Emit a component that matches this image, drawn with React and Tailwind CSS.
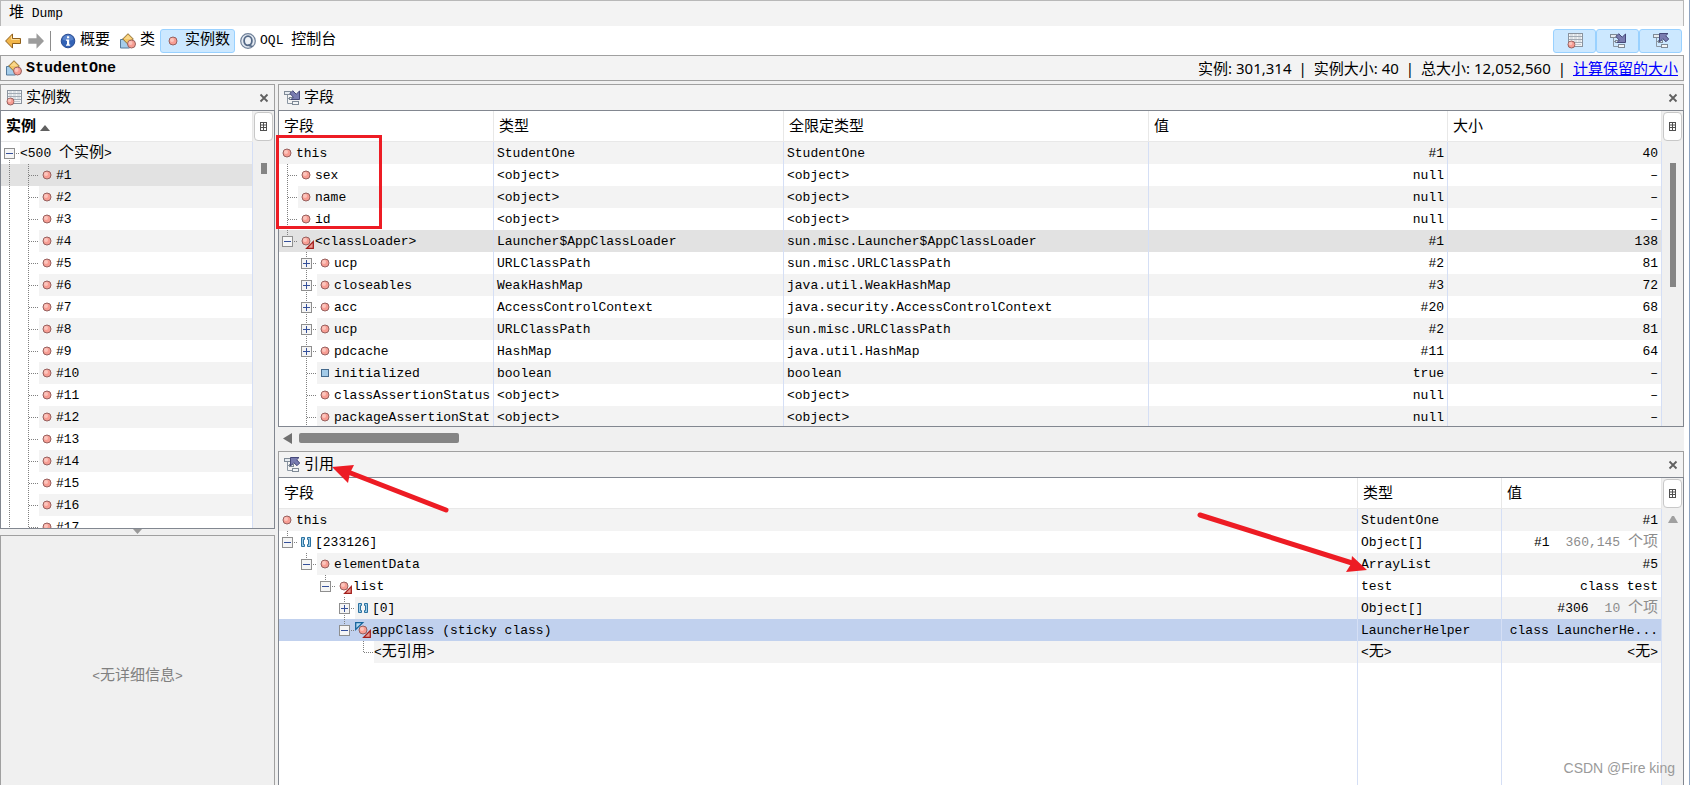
import { useState } from "react";
import clsx from "clsx";

const INSTANCES = Array.from({ length: 17 }, (_, i) => `#${i + 1}`);

const FIELDS = [
    { guides: [], icon: "object", name: "this", type: "StudentOne", full: "StudentOne", value: "#1", size: "40" },
    { guides: ["tee"], icon: "object", name: "sex", type: "<object>", full: "<object>", value: "null", size: "–" },
    { guides: ["tee"], icon: "object", name: "name", type: "<object>", full: "<object>", value: "null", size: "–" },
    { guides: ["tee"], icon: "object", name: "id", type: "<object>", full: "<object>", value: "null", size: "–" },
    { guides: ["minus"], icon: "static", name: "<classLoader>", type: "Launcher$AppClassLoader", full: "sun.misc.Launcher$AppClassLoader", value: "#1", size: "138" },
    { guides: ["none", "plus"], icon: "object", name: "ucp", type: "URLClassPath", full: "sun.misc.URLClassPath", value: "#2", size: "81" },
    { guides: ["none", "plus"], icon: "object", name: "closeables", type: "WeakHashMap", full: "java.util.WeakHashMap", value: "#3", size: "72" },
    { guides: ["none", "plus"], icon: "object", name: "acc", type: "AccessControlContext", full: "java.security.AccessControlContext", value: "#20", size: "68" },
    { guides: ["none", "plus"], icon: "object", name: "ucp", type: "URLClassPath", full: "sun.misc.URLClassPath", value: "#2", size: "81" },
    { guides: ["none", "plus"], icon: "object", name: "pdcache", type: "HashMap", full: "java.util.HashMap", value: "#11", size: "64" },
    { guides: ["none", "tee"], icon: "primitive", name: "initialized", type: "boolean", full: "boolean", value: "true", size: "–" },
    { guides: ["none", "tee"], icon: "object", name: "classAssertionStatus", type: "<object>", full: "<object>", value: "null", size: "–" },
    { guides: ["none", "tee"], icon: "object", name: "packageAssertionStat", type: "<object>", full: "<object>", value: "null", size: "–" },
];

const REFERENCES = [
    { guides: [], icon: "object", name: "this", type: "StudentOne", value: "#1" },
    { guides: ["minus"], icon: "array", name: "[233126]", type: "Object[]", value: "#1", items: "360,145" },
    { guides: ["none", "minus"], icon: "object", name: "elementData", type: "ArrayList", value: "#5" },
    { guides: ["none", "none", "minus"], icon: "static", name: "list", type: "test", value: "class test" },
    { guides: ["none", "none", "none", "plus"], icon: "array", name: "[0]", type: "Object[]", value: "#306", items: "10" },
    { guides: ["none", "none", "none", "minus"], icon: "root", name: "appClass (sticky class)", type: "LauncherHelper", value: "class LauncherHe..." },
    { guides: ["none", "none", "none", "none", "end"], name: "<无引用>", type: "<无>", value: "<无>" },
];

// Latin runs are monospaced, Chinese runs are set a little larger
const Text = ({ children }) =>
    children.split(/([\u4e00-\u9fff]+)/).map((part, i) =>
        i % 2 ? <span key={i} className="text-[15px]">{part}</span> : part
    );

/* ---------- icons ---------- */

const Dot = ({ cx = 8, cy = 8, r = 4 }) => (
    <g>
        <circle cx={cx} cy={cy} r={r} fill="#f79d93" stroke="#96615f" />
        <circle cx={cx - 1} cy={cy - 1} r={r / 2} fill="#fcc4bc" />
    </g>
);

const NodeIcon = ({ type }) => (
    <svg className="w-4 h-4 shrink-0 overflow-visible" viewBox="0 0 16 16" aria-hidden="true">
        {type === "object" && <Dot />}
        {type === "primitive" && <rect x="4.5" y="4.5" width="7" height="7" fill="#a3cbe8" stroke="#456a8c" />}
        {type === "array" && (
            <g fill="#9ccbe8" stroke="#2a719f">
                <path d="M3.5 3.5h3v2h-1v5h1v2h-3z" />
                <path d="M12.500 3.5h-3v2h1v5h-1v2h3z" />
            </g>
        )}
        {type === "root" && <path d="M.7.7h7L.7 7.500z" fill="#b4dbf5" stroke="#17659c" strokeWidth="1.3" />}
        {(type === "static" || type === "root") && (
            <g>
                <Dot />
                <path d="M15.300 8.5v6.800H8.700z" fill="#ee9a92" stroke="#a3201d" strokeWidth="1.3" />
            </g>
        )}
    </svg>
);

const ClassIcon = () => (
    <svg className="w-4 h-4" viewBox="0 0 16 16" aria-hidden="true">
        <path d="M.5 6.500h3l6 4v4.500h-9z" fill="#a5cdea" stroke="#557a9c" />
        <path d="M8 .7 13.3 6 8 11.300 2.700 6z" fill="#f3c768" stroke="#8f6f35" />
        <path d="M8 2.200 11.500 6H4.500z" fill="#f9d88c" />
        <Dot cx={11.5} cy={11} r={4} />
    </svg>
);

const ListIcon = () => (
    <svg className="w-4 h-4" viewBox="0 0 16 16" aria-hidden="true">
        <rect x="1.500" y=".5" width="14" height="13" fill="#f2f4f6" stroke="#8a939e" />
        <path d="M2 3.500h13M2 6.500h13M2 9.500h13" stroke="#a2abb5" />
        <path d="M3 2h3M7 2h3M11 2h3M3 5h3M7 5h3M11 5h3M7 8h3M11 8h3M9 11.500h5" stroke="#c3cad1" />
        <Dot cx={4.5} cy={11.5} r={3.5} />
    </svg>
);

const TreeIcon = ({ up }) => (
    <svg className="w-4 h-4" viewBox="0 0 16 16" aria-hidden="true">
        <path d="M3.500 4v9.500h4.500M3.500 8.500h4" fill="none" stroke="#8b96a2" />
        <rect x=".5" y="1.500" width="6" height="3" fill="#e6ebf0" stroke="#7f8a96" />
        <rect x="8.500" y="11.500" width="6" height="3" fill="#f3f5f7" stroke="#7f8a96" />
        <rect x="5.500" y="7.500" width="4" height="2" fill="#e6ebf0" stroke="#7f8a96" />
        {up ? (
            <path d="M6.500.5h8.500l-2.300 2.300 3 3.200-2.700 2.700-3.200-3-3.300 3.300z" fill="#797cb0" stroke="#454879" />
        ) : (
            <path d="M15.500 9.500H7l2.300-2.300-3.300-3.700L8.700.700l3.500 3.500L15.500 1z" fill="#797cb0" stroke="#454879" />
        )}
    </svg>
);

const ArrowIcon = ({ back }) => (
    <svg className="w-4 h-4" viewBox="0 0 16 16" aria-hidden="true">
        {back ? (
            <g>
                <path d="M7.500.9v4.600h8v5h-8v4.600L.6 8z" fill="#f2b64a" stroke="#8f5f1a" />
                <path d="M6.500 3.200v3.300h8" fill="none" stroke="#fbdc98" />
            </g>
        ) : (
            <path d="M8.500.3v5H.3v5.400h8.200v5L16 8z" fill="#9c9c9c" />
        )}
    </svg>
);

const InfoIcon = () => (
    <svg className="w-4 h-4" viewBox="0 0 16 16" aria-hidden="true">
        <circle cx="8" cy="8" r="6.800" fill="#3262b5" stroke="#2a4c92" />
        <path d="M2.500 6.500a5.600 5.600 0 0 1 11 0c-3 1.600-8 1.600-11 0z" fill="#5a84cc" />
        <path d="M7 3.200h2.200v2H7zM6 6.500h3.200v5h1v1.200H6v-1.200h1V7.700H6z" fill="#fff" />
    </svg>
);

const OqlIcon = () => (
    <svg className="w-4 h-4" viewBox="0 0 16 16" aria-hidden="true">
        <circle cx="8" cy="8" r="7.300" fill="#e3e9f1" stroke="#6f8199" strokeWidth="1.200" />
        <ellipse cx="8" cy="7.800" rx="3.900" ry="4.600" fill="#eef2f7" stroke="#546987" strokeWidth="1.800" />
        <path d="M8.500 11.500c1 1.600 2.200 2 4 1.600" fill="none" stroke="#546987" strokeWidth="1.500" />
    </svg>
);

/* ---------- shared parts ---------- */

const STEMS = {
    line: "M8.500 0v22",
    tee: "M8.500 0v22M9 11.500h10",
    end: "M8.500 0v12M9 11.500h10",
    plus: "M8.500 0v22M9 11.500h10",
    minus: "M8.500 0v12M9 11.500h10",
    top: "M8.500 12v10M9 11.500h10",
};

const Guide = ({ kind }) => {
    const handle = kind === "plus" || kind === "minus" || kind === "top";
    const svg = (
        <svg className="block w-[19px] h-[22px]" viewBox="0 0 19 22" fill="none" aria-hidden="true">
            {STEMS[kind] && <path d={STEMS[kind]} stroke="#808080" strokeDasharray="1 1" />}
            {handle && (
                <g>
                    <rect x="3.500" y="6.500" width="10" height="10" fill="#f5f5f5" stroke="#8f8f8f" />
                    <path d={kind === "plus" ? "M5 11.500h7M8.500 8v7" : "M5 11.500h7"} stroke="#35509a" />
                </g>
            )}
        </svg>
    );
    return handle ? (
        <button type="button" className="shrink-0" aria-label={kind === "plus" ? "展开" : "折叠"}>
            {svg}
        </button>
    ) : (
        <span className="shrink-0">{svg}</span>
    );
};

const NameCell = ({ guides, icon, name, striped }) => (
    <td className="p-0 overflow-hidden border-r border-[#d5dff5]">
        <div className="flex h-[22px]">
            {guides.map((kind, i) => <Guide key={i} kind={kind} />)}
            <div className={clsx("flex flex-1 items-center", striped && "bg-[#f3f3f3]")}>
                {icon && <NodeIcon type={icon} />}
                <span className={clsx("pt-[2px]", icon && "pl-px")}><Text>{name}</Text></span>
            </div>
        </div>
    </td>
);

const Cell = ({ children, right, striped }) => (
    <td
        className={clsx(
            "px-[3px] pt-[2px] pb-0 overflow-hidden border-r border-[#d5dff5]",
            right && "text-right",
            striped && "bg-[#f3f3f3]"
        )}
    >
        {children}
    </td>
);

const Head = ({ children }) => (
    <th className="pl-[5px] pt-1 pb-0 text-left font-normal text-[15px] border-r border-b border-[#e8e8e8]">
        {children}
    </th>
);

const rowClass = (selected, color) => clsx("h-[22px]", selected && color);

const Panel = ({ icon, title, className, children }) => (
    <section className={clsx("flex flex-col min-h-0", className)}>
        <header className="flex items-center h-[26px] shrink-0 px-[5px] bg-[#f3f3f3] border border-b-0 border-[#a0a0a0]">
            {icon}
            <h2 className="pl-1 pt-[2px] text-[15px]">{title}</h2>
            <button type="button" aria-label="关闭" className="ml-auto">
                <svg className="w-[10px] h-[10px]" viewBox="0 0 10 10" aria-hidden="true">
                    <path d="M1.500 1.500l7 7M8.500 1.500l-7 7" stroke="#606060" strokeWidth="1.800" />
                </svg>
            </button>
        </header>
        {children}
    </section>
);

const ScrollColumn = ({ children }) => (
    <div className="flex flex-col items-center shrink-0 w-[21px] bg-[#f0f0f0]">
        <button
            type="button"
            aria-label="选择列"
            className="flex items-center justify-center mt-px w-[19px] h-[29px] bg-white border border-[#c8c8c8] rounded"
        >
            <svg className="w-[7px] h-[9px]" viewBox="0 0 7 9" fill="none" stroke="#505050" aria-hidden="true">
                <path d="M.5 0v9M3.500 0v9M6.500 0v9M0 .5h7M0 3h7M0 5.500h7M0 8.500h7" />
            </svg>
        </button>
        {children}
    </div>
);

/* ---------- panels ---------- */

const InstancesPanel = () => {
    const [selected, setSelected] = useState("#1");
    return (
        <Panel icon={<ListIcon />} title="实例数" className="flex-[446]">
            <div className="flex flex-1 min-h-0 overflow-hidden bg-white border border-[#828790]">
                <div className="flex-1 overflow-hidden">
                    <table className="w-full table-fixed border-separate border-spacing-0">
                        <thead>
                            <tr className="h-[31px]">
                                <Head>
                                    <span className="flex items-center gap-1 font-bold">
                                        实例
                                        <svg className="w-[10px] h-[6px]" viewBox="0 0 10 6" aria-hidden="true">
                                            <path d="M5 0l5 6H0z" fill="#606060" />
                                        </svg>
                                    </span>
                                </Head>
                            </tr>
                        </thead>
                        <tbody>
                            <tr className="h-[22px]">
                                <NameCell guides={["top"]} name="<500 个实例>" striped />
                            </tr>
                            {INSTANCES.map((name, i) => (
                                <tr
                                    key={name}
                                    className={rowClass(selected === name, "bg-[#e2e2e2]")}
                                    onClick={() => setSelected(name)}
                                >
                                    <NameCell guides={["line", "tee"]} icon="object" name={name} striped={i % 2 === 1 && selected !== name} />
                                </tr>
                            ))}
                        </tbody>
                    </table>
                </div>
                <ScrollColumn>
                    <div className="mt-[22px] w-[6px] h-[11px] bg-[#858585]" />
                </ScrollColumn>
            </div>
        </Panel>
    );
};

const FieldsPanel = () => (
    <Panel icon={<TreeIcon />} title="字段" className="flex-[367]">
        <div className="flex flex-1 min-h-0 overflow-hidden bg-white border border-[#828790]">
            <div className="flex-1 overflow-hidden">
                <table className="w-full table-fixed border-separate border-spacing-0 whitespace-nowrap">
                    <colgroup>
                        <col className="w-[215px]" />
                        <col className="w-[290px]" />
                        <col />
                        <col className="w-[299px]" />
                        <col className="w-[214px]" />
                    </colgroup>
                    <thead>
                        <tr className="h-[31px]">
                            <Head>字段</Head>
                            <Head>类型</Head>
                            <Head>全限定类型</Head>
                            <Head>值</Head>
                            <Head>大小</Head>
                        </tr>
                    </thead>
                    <tbody>
                        {FIELDS.map((f, i) => {
                            const selected = f.name === "<classLoader>";
                            const striped = i % 2 === 0 && !selected;
                            return (
                                <tr key={i} className={rowClass(selected, "bg-[#e2e2e2]")}>
                                    <NameCell {...f} striped={striped} />
                                    <Cell striped={striped}>{f.type}</Cell>
                                    <Cell striped={striped}>{f.full}</Cell>
                                    <Cell striped={striped} right>{f.value}</Cell>
                                    <Cell striped={striped} right>{f.size}</Cell>
                                </tr>
                            );
                        })}
                    </tbody>
                </table>
            </div>
            <ScrollColumn>
                <div className="mt-[22px] w-[6px] h-[124px] bg-[#858585]" />
            </ScrollColumn>
        </div>
        <div className="flex items-center gap-[7px] h-6 shrink-0 pl-[5px] pb-[2px]">
            <svg className="w-[9px] h-[11px]" viewBox="0 0 9 11" aria-hidden="true">
                <path d="M9 0v11L0 5.500z" fill="#707070" />
            </svg>
            <div className="w-40 h-[10px] bg-[#858585] rounded-[2px]" />
        </div>
    </Panel>
);

const ReferencesPanel = () => (
    <Panel icon={<TreeIcon up />} title="引用" className="flex-[334]">
        <div className="flex flex-1 min-h-0 overflow-hidden bg-white border border-b-0 border-[#828790]">
            <div className="flex-1 overflow-hidden">
                <table className="w-full h-full table-fixed border-separate border-spacing-0 whitespace-nowrap">
                    <colgroup>
                        <col />
                        <col className="w-36" />
                        <col className="w-40" />
                    </colgroup>
                    <thead>
                        <tr className="h-[31px]">
                            <Head>字段</Head>
                            <Head>类型</Head>
                            <Head>值</Head>
                        </tr>
                    </thead>
                    <tbody>
                        {REFERENCES.map((r, i) => {
                            const selected = r.icon === "root";
                            const striped = i % 2 === 0 && !selected;
                            return (
                                <tr key={i} className={rowClass(selected, "bg-[#c1d1ee]")}>
                                    <NameCell {...r} striped={striped} />
                                    <Cell striped={striped}><Text>{r.type}</Text></Cell>
                                    <Cell striped={striped} right>
                                        <Text>{r.value}</Text>
                                        {r.items && (
                                            <span className="pl-4 text-[#8c8c8c]"><Text>{`${r.items} 个项`}</Text></span>
                                        )}
                                    </Cell>
                                </tr>
                            );
                        })}
                        <tr>
                            <Cell />
                            <Cell />
                            <Cell />
                        </tr>
                    </tbody>
                </table>
            </div>
            <ScrollColumn>
                <svg className="w-[10px] h-[7px] mt-2" viewBox="0 0 10 7" aria-hidden="true">
                    <path d="M4 0h2l4 7H0z" fill="#a0a0a0" />
                </svg>
            </ScrollColumn>
        </div>
    </Panel>
);

const Annotations = () => (
    <svg className="absolute left-0 top-0 w-[1690px] h-[785px] pointer-events-none" viewBox="0 0 1690 785" fill="#ed1c24" aria-hidden="true">
        <rect x="277.500" y="136.500" width="103" height="91" fill="none" stroke="#ed1c24" strokeWidth="3" />
        <path d="M446 510 348 472" stroke="#ed1c24" strokeWidth="5" strokeLinecap="round" />
        <path d="M332 467l22-2-4 8-2 10z" />
        <path d="M1200 515l152 48" stroke="#ed1c24" strokeWidth="5" strokeLinecap="round" />
        <path d="M1367 570l-15-14-1 8-5 8z" />
    </svg>
);

const App = () => {
    const [view, setView] = useState("实例数");
    const tabs = [
        { label: "概要", icon: <InfoIcon /> },
        { label: "类", icon: <ClassIcon /> },
        { label: "实例数", icon: <NodeIcon type="object" /> },
        { label: "OQL 控制台", icon: <OqlIcon /> },
    ];
    const toggles = [
        { label: "实例数", icon: <ListIcon /> },
        { label: "字段", icon: <TreeIcon /> },
        { label: "引用", icon: <TreeIcon up /> },
    ];

    return (
        <div className="relative h-screen overflow-hidden bg-white pr-[5px] border-r border-[#8ea3c0] text-[13px] text-black leading-5 font-['Liberation_Mono','Noto_Sans_CJK_SC',monospace]">
            <div className="flex flex-col h-full bg-[#f0f0f0]">
                {/* Title */}
                <h1 className="h-[26px] shrink-0 pl-2 pt-[3px] bg-[#f3f3f3] border border-b-0 border-[#b8b8b8]">
                    <Text>堆 Dump</Text>
                </h1>

                {/* Toolbar */}
                <div className="flex items-center h-[29px] shrink-0 pl-[5px] pr-[2px] bg-white">
                    <button type="button" aria-label="后退"><ArrowIcon back /></button>
                    <button type="button" aria-label="前进" className="ml-[7px]"><ArrowIcon /></button>
                    <div className="w-px h-5 ml-[6px] mr-1 bg-[#8c8c8c]" />
                    {tabs.map(tab => (
                        <button
                            key={tab.label}
                            type="button"
                            onClick={() => setView(tab.label)}
                            className={clsx(
                                "flex items-center gap-1 h-6 px-1 border rounded-[3px]",
                                view === tab.label ? "bg-[#cce8ff] border-[#99d1ff]" : "border-transparent"
                            )}
                        >
                            {tab.icon}
                            <span className="pt-px"><Text>{tab.label}</Text></span>
                        </button>
                    ))}
                    <div className="flex ml-auto">
                        {toggles.map(t => (
                            <button
                                key={t.label}
                                type="button"
                                aria-label={t.label}
                                className="flex items-center justify-center w-[43px] h-6 bg-[#cce8ff] border border-[#99d1ff] rounded-[3px]"
                            >
                                {t.icon}
                            </button>
                        ))}
                    </div>
                </div>

                {/* Selected class summary */}
                <div className="flex items-center h-[26px] shrink-0 px-[5px] bg-[#f3f3f3] border border-[#a0a0a0]">
                    <ClassIcon />
                    <strong className="pl-1 pt-[2px] text-[15px]">StudentOne</strong>
                    <div className="flex gap-[7px] ml-auto text-[15px] font-['Noto_Sans','Noto_Sans_CJK_SC',sans-serif]">
                        <span>实例: 301,314</span>
                        <span>|</span>
                        <span>实例大小: 40</span>
                        <span>|</span>
                        <span>总大小: 12,052,560</span>
                        <span>|</span>
                        <a href="#retained" className="text-[#0000ff] underline">计算保留的大小</a>
                    </div>
                </div>

                <div className="flex flex-1 gap-[3px] min-h-0 pt-[3px]">
                    <div className="flex flex-col w-[275px] shrink-0">
                        <InstancesPanel />
                        <div className="flex justify-center h-[6px] shrink-0">
                            <svg className="w-[9px] h-[5px]" viewBox="0 0 9 5" aria-hidden="true">
                                <path d="M0 0h9L4.500 5z" fill="#999" />
                            </svg>
                        </div>
                        {/* Details */}
                        <div className="flex flex-[249] items-center justify-center border border-b-0 border-[#a0a0a0] text-[#808080]">
                            <p className="pt-8"><Text>{"<无详细信息>"}</Text></p>
                        </div>
                    </div>
                    <div className="flex flex-col flex-1 min-w-0">
                        <FieldsPanel />
                        <ReferencesPanel />
                    </div>
                </div>
            </div>

            <Annotations />
            <p className="absolute right-[14px] bottom-[7px] text-[14px] text-[#9a9a9a] font-['Liberation_Sans',sans-serif]">
                CSDN @Fire king
            </p>
        </div>
    );
};

export default App;
